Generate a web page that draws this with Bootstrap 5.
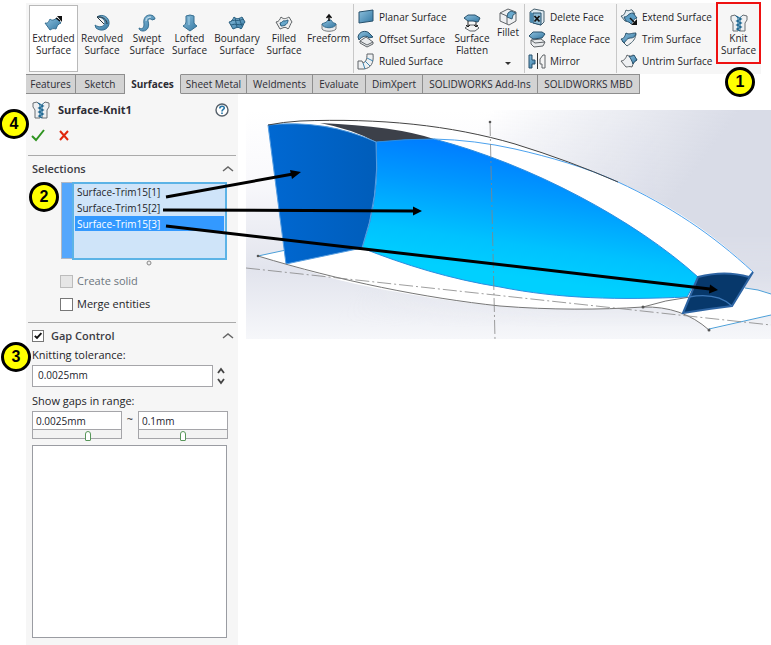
<!DOCTYPE html>
<html lang="en">
<head>
<meta charset="utf-8">
<meta name="viewport" content="width=device-width, initial-scale=1">
<title>Surface-Knit1</title>
<link href="https://cdn.jsdelivr.net/npm/bootstrap@5.3.0/dist/css/bootstrap.min.css" rel="stylesheet">
<style>
  body { font-family: "Open Sans", "Noto Sans", sans-serif; font-size: 10px; line-height: 12px; color: #1e1e28; background: #fff; }
  button, input { font: inherit; color: inherit; }
  svg { display: block; overflow: visible; }
  .workspace { padding: 3px 0 0 26px; }
  .ribbon { display: grid; grid-template-columns: 53px 46px 44px 41px 54px 40px 49px 99px 40px 32px 92px 1fr 46px; height: 71px; margin-right: 10px; background: #f6f6f6; max-width: 735px; }
  .tool { border: 1px solid transparent; background: none; padding: 10px 0 0; display: flex; flex-direction: column; align-items: center; white-space: nowrap; text-align: center; }
  .tool svg, .tool-row svg { width: 18px; height: 18px; flex: none; }
  .tool.active { background: #fff; border-color: #b9b9b9; margin: 2px 1px 2px 3px; padding-top: 8px; }
  .tool.fillet { padding-top: 4px; }
  .tool.knit { border: 2px solid #ee1111; width: 45px; height: 62px; margin-top: -1px; justify-self: end; }
  .tool-col { border-left: 1px solid #c8c8c8; padding: 2px 0 0 3px; height: 69px; margin-top: 1px; }
  .tool-row { border: 0; background: none; padding: 0; height: 22px; display: flex; align-items: center; gap: 4px; white-space: nowrap; }
  .tabs { display: grid; grid-template-columns: 50px 49px 56px 66px 66px 53px 57px 115px 102px; height: 20px; width: max-content; }
  .tabs button { background: #d3d3d3; border: 1px solid #8e8e8e; border-left-width: 0; padding: 0; white-space: nowrap; color: #2c2c34; }
  .tabs button.active { background: #f6f6f6; border-top-color: #f6f6f6; border-bottom-color: #f6f6f6; font-weight: 700; }
  .panel { width: 212px; flex: none; background: #f6f6f6; padding: 6px 5px 6px 6px; font-size: 11px; line-height: 16px; min-height: 551px; }
  .panel h1 { font-size: 11px; line-height: 20px; font-weight: 700; color: #2c2c34; margin: 0; }
  .panel h2 { font-size: 11px; line-height: 16px; font-weight: 600; color: #3c3c44; margin: 0; }
  .plain { border: 0; background: none; padding: 0; }
  .rule { border-top: 1px solid #aaa; margin: 0 -3px 0 -4px; }
  .decide { margin: 8px 0 13px; gap: 14px; }
  .group-head { margin: 5px 0; }
  .picker { margin-left: 29px; height: 78px; }
  .picker-bar { width: 11px; background: #55a7fc; border: 1px solid #b0b8c4; border-width: 1px 0 1px 1px; margin-bottom: 1px; }
  .picked { width: 155px; border: 2px solid #5cb3e6; background: #cfe4f9; padding: 0 1px; }
  .picked button { display: block; width: 100%; text-align: left; padding: 0 0 0 2px; border: 0; background: none; height: 16px; line-height: 14px; font-size: 10px; }
  .picked button.chosen { background: #3399ff; color: #fff; height: 15px; }
  .handle { margin-left: 114px; }
  .option { gap: 4px; margin: 7px 0 0 28px; }
  .option + .rule { margin-top: 10px; }
  .tick { appearance: none; width: 13px; height: 13px; border: 1px solid #777; background: #fff; margin: 0; flex: none; }
  .tick:disabled { background: #e6e6e6; border-color: #bcbcbc; }
  .tick.gap-tick { width: 12px; height: 12px; margin-right: 7px; }
  .tick:checked { background: #fff url("data:image/svg+xml,%3Csvg xmlns='http://www.w3.org/2000/svg' viewBox='0 0 10 10'%3E%3Cpath d='M1.8 4.8 4 7 8.4 2.2' fill='none' stroke='%23111' stroke-width='1.9'/%3E%3C/svg%3E") center/10px no-repeat; }
  .caption { display: block; margin: 6px 0 2px; }
  .group-head + .caption { margin-top: 3px; }
  .group-head.last { margin-bottom: 0; }
  .field { border: 1px solid #a5a5a9; background: #fff; border-radius: 0; font-size: 10px; min-width: 0; color: #22222c; }
  .tolerance { width: 181px; height: 22px; padding: 0 5px 3px; }
  .ranges { width: 196px; }
  .range-box { width: 90px; }
  .range-box .field { width: 100%; height: 19px; padding: 0 3px; display: block; }
  .range-box input[type=range] { appearance: none; display: block; width: 100%; height: 9px; margin: 0; border: 1px solid #a5a5a9; border-top: 0; background: #f3f3f3; }
  .range-box input[type=range]::-webkit-slider-thumb { appearance: none; width: 6px; height: 10px; border: 1px solid #58965a; border-radius: 3px 3px 1px 1px; background: #fff; margin-top: 3px; }
  .gap-list { width: 195px; height: 193px; border: 1px solid #9a9ca2; background: #fff; margin-top: 6px; }
  .view { margin: 16px 0 0 8px; min-width: 0; }
  .marker { position: absolute; width: 30px; height: 30px; border: 3px solid #000; border-radius: 50%; background: #ffff00; color: #000; font: 700 16px/24px "Liberation Sans", Arial, sans-serif; text-align: center; z-index: 3; }
  .m1 { left: 725px; top: 67px; } .m2 { left: 29px; top: 182px; } .m3 { left: 1px; top: 342px; } .m4 { left: -1px; top: 109px; }
</style>
<script src="https://cdn.jsdelivr.net/npm/bootstrap@5.3.0/dist/js/bootstrap.bundle.min.js"></script>
</head>
<body>
<svg width="0" height="0" class="position-absolute" aria-hidden="true">
  <defs>
    <linearGradient id="steel" x1="0" y1="0" x2="1" y2="1"><stop stop-color="#8dc0dd"/><stop offset="1" stop-color="#3478a3"/></linearGradient>
    <symbol id="zip" viewBox="0 0 18 18"><path d="M1 2 5 1l3 3v13H3V9L1 6zM17 2l-4-1-3 3v13h5V9l2-3z" fill="#eef0f2" stroke="#686e73"/><path d="M6 2l5 3-4 2 4 2-4 2 4 2-4 2 3 2" fill="none" stroke="#1f6791" stroke-width="1.400"/><path d="M12 2 7 5l4 2-4 2 4 2-4 2 4 2" fill="none" stroke="#5d9fc5" stroke-width=".8"/></symbol>
  </defs>
</svg>
<main class="workspace position-relative">
  <div class="ribbon" role="toolbar" aria-label="Surfaces">
    <button class="tool active"><svg viewBox="0 0 18 18"><path d="M0 9c3 1 4-2 5-4 2 2 4 1 7-1l4 5c-3 1-4 3-5 6-3-1-4 0-6 1z" fill="url(#steel)" stroke="#376f91"/><path d="M11 4l4 3" stroke="#111" stroke-width="1.500"/><path d="M12 2h5v6z" fill="#111"/></svg><span>Extruded<br>Surface</span></button>
    <button class="tool"><svg viewBox="0 0 18 18"><path d="M4 3C9-1 17 3 16 10c-1 6-8 8-13 4l-1-3c4 3 9 2 10-2 0-3-3-6-8-6z" fill="url(#steel)" stroke="#376f91"/><path d="M4 3c6-1 10 3 10 7M4 3l7 7" fill="none" stroke="#26343d"/></svg><span>Revolved<br>Surface</span></button>
    <button class="tool"><svg viewBox="0 0 18 18"><path d="M1 14c4 2 5-1 5-4-1-6 2-9 6-9 3 0 5 2 5 4l-3 1c-2-2-4-1-4 1 2 6-1 10-5 10-2 0-4-1-4-3z" fill="url(#steel)" stroke="#376f91"/><path d="M8 7c0-3 2-4 5-4" fill="none" stroke="#d5e9f3"/></svg><span>Swept<br>Surface</span></button>
    <button class="tool"><svg viewBox="0 0 18 18"><path d="M5 2q4-2 8 0v7q1 2 3 3l-7 5-7-5q3-1 3-4z" fill="url(#steel)" stroke="#376f91"/><path d="M8 3v8" stroke="#a7d2e8"/></svg><span>Lofted<br>Surface</span></button>
    <button class="tool"><svg viewBox="0 0 18 18"><path d="M1 8C4 8 5 5 6 3c3 3 6 1 8 0l3 5c-2 2-2 5-4 7-3-3-5-1-8 0z" fill="url(#steel)" stroke="#285d7e"/><path d="M3 11c5-2 7 1 12-1M7 4l2 9m2-9 3 8M3 7c5-2 7 1 12-2" fill="none" stroke="#285d7e"/></svg><span>Boundary<br>Surface</span></button>
    <button class="tool"><svg viewBox="0 0 18 18"><path d="M1 8C4 8 5 5 6 3c3 3 6 1 8 0l3 5c-2 2-2 5-4 7-3-3-5-1-8 0z" fill="#eee" stroke="#5e6366"/><path d="M5 9c2 0 3-3 4-2 2 0 3-1 4-1 0 4-3 6-7 6z" fill="#68a8cc" stroke="#285d7e"/></svg><span>Filled<br>Surface</span></button>
    <button class="tool"><svg viewBox="0 0 18 18"><path d="M2 10v5c2 3 12 3 14 0v-5z" fill="#e9ebed" stroke="#767b7e"/><path d="M2 10c1 5 13 5 14 0-1-1-4-1-5-4H8C7 9 3 9 2 10z" fill="url(#steel)" stroke="#376f91"/><path d="M9 7V1M6.500 4 9 1l2.500 3" fill="none" stroke="#111" stroke-width="1.500"/></svg><span>Freeform</span></button>
    <div class="tool-col">
      <button class="tool-row"><svg viewBox="0 0 18 18"><path d="M2 4 16 2v11L2 15z" fill="url(#steel)" stroke="#28516c"/></svg>Planar Surface</button>
      <button class="tool-row"><svg viewBox="0 0 18 18"><path d="M3 11l6-4 7 5v2l-6 3-7-4z" fill="#e9ebed" stroke="#606569"/><path d="M3 11l7 4 6-3" fill="none" stroke="#606569"/><path d="M1 7C2 1 9 0 12 3l4 4-4 1C10 5 5 6 2 10z" fill="url(#steel)" stroke="#28516c"/></svg>Offset Surface</button>
      <button class="tool-row"><svg viewBox="0 0 18 18"><path d="M1 9h4l1 2c3-1 4-4 4-9h6c1 9-2 14-9 15H1z" fill="#eef0f2" stroke="#606569"/><path d="M6 11l2 6M8 9l5 5M10 6l6 3" stroke="#3e86b1"/></svg>Ruled Surface</button>
    </div>
    <button class="tool"><svg viewBox="0 0 18 18"><path d="M2 14l4-3h7l3 3-4 3H7z" fill="#f3f3f3" stroke="#606569"/><path d="M1 4l4-3h7l5 3-2 4-5-1H5z" fill="url(#steel)" stroke="#28516c"/><path d="M5 7v6m-2-2 2 2 2-2m6-3v5m-2-2 2 2 2-2" fill="none" stroke="#222"/></svg><span>Surface<br>Flatten</span></button>
    <button class="tool fillet"><svg viewBox="0 0 18 18"><path d="M1 5 9 1l8 3v9l-7 4-9-4z" fill="#eef0f2" stroke="#606569"/><path d="M1 5l7 3v8" fill="none" stroke="#606569"/><path d="M8 9q0-5 4-6l5 2q-4 1-4 6z" fill="#6aaace" stroke="#345d76"/></svg><span>Fillet</span><svg style="height:5px" viewBox="0 0 18 5" class="mt-4"><path d="M6 0h6L9 3z" fill="#333"/></svg></button>
    <div class="tool-col">
      <button class="tool-row"><svg viewBox="0 0 18 18"><path d="M2 4 6 1l10 2v11l-3 3-11-3z" fill="#dbe9f1" stroke="#48616f"/><path d="M5 5h8v12l-8-2z" fill="#8dbbd5" stroke="#28516c"/><path d="M2 4l3 1v10l-3-1z" fill="#4a88ae"/><path d="M6.500 8l5 5.500m0-5.500-5 5.500" stroke="#111" stroke-width="1.800"/></svg>Delete Face</button>
      <button class="tool-row"><svg viewBox="0 0 18 18"><path d="M3 10l10-1 4 3-2 4-9 1-3-3z" fill="#e9ebed" stroke="#606569"/><path d="M3 10l4 3 10-1" fill="none" stroke="#606569"/><path d="M1 6l4-4h9l3 2-3 4-9 1z" fill="url(#steel)" stroke="#28516c"/></svg>Replace Face</button>
      <button class="tool-row"><svg viewBox="0 0 18 18"><path d="M1 3h3v5h3v4H4v4H1z" fill="url(#steel)" stroke="#28516c"/><path d="M9.500 1v16" stroke="#333"/><path d="M17 3h-2l-3 4v5h2v4h3z" fill="#f4f4f4" stroke="#606569"/></svg>Mirror</button>
    </div>
    <div class="tool-col">
      <button class="tool-row"><svg viewBox="0 0 18 18"><path d="M1 8c3 0 4-3 5-6 3 2 5-1 6 0l3 4c-3 1-3 4-5 7-3-1-4 1-5 0z" fill="#e4edf2" stroke="#48616f"/><path d="M4 9c4 0 4-4 9-4l4 5c-4 1-4 4-6 6-1-2-3-2-5-3z" fill="#5c9dc4" stroke="#28516c"/><path d="M10 10l4 4" stroke="#111" stroke-width="1.500"/><path d="M17 11v6h-6z" fill="#111"/></svg>Extend Surface</button>
      <button class="tool-row"><svg viewBox="0 0 18 18"><path d="M2 11c3 0 4-3 5-5 3 2 6-1 9-2-1 7-5 9-9 12z" fill="#f0f1f2" stroke="#48616f"/><path d="M1 9c3 0 4-3 5-6 3 2 5 0 10 0-1 5-4 5-6 5-3 0-4 3-6 5z" fill="url(#steel)" stroke="#28516c"/></svg>Trim Surface</button>
      <button class="tool-row"><svg viewBox="0 0 18 18"><path d="M1 9c3 0 5-3 6-6 3 2 4 1 6 0l4 5c-3 1-4 4-5 7-3-1-4 0-6 0z" fill="#eef0f2" stroke="#606569"/><path d="M9 4c2 1 3 0 5-1l3 5c-2 1-3 2-4 4-1-3-2-5-4-8z" fill="url(#steel)" stroke="#28516c"/></svg>Untrim Surface</button>
    </div>
    <button class="tool knit"><svg><use href="#zip"/></svg><span>Knit<br>Surface</span></button>
  </div>

  <nav class="tabs" aria-label="Command groups">
    <button>Features</button><button>Sketch</button><button class="active">Surfaces</button><button>Sheet Metal</button><button>Weldments</button><button>Evaluate</button><button>DimXpert</button><button>SOLIDWORKS Add-Ins</button><button>SOLIDWORKS MBD</button>
  </nav>

  <div class="d-flex align-items-start">
    <section class="panel">
      <div class="d-flex align-items-center">
        <svg width="18" height="18" class="me-2"><use href="#zip"/></svg>
        <h1 class="flex-grow-1">Surface-Knit1</h1>
        <button class="plain me-1" aria-label="Help"><svg width="14" height="14" viewBox="0 0 14 14"><circle cx="7" cy="7" r="6" fill="#fff" stroke="#56606a" stroke-width="1.400"/><path d="M4.800 5.500c0-3 4.500-3 4.500-.5C9.300 6.500 7 6.500 7 8.500m0 1v1.500" fill="none" stroke="#2877a8" stroke-width="1.600"/></svg></button>
      </div>
      <div class="d-flex decide">
        <button class="plain" aria-label="OK"><svg width="14" height="14" viewBox="0 0 14 14"><path d="M0 8l4 4 8-10" fill="none" stroke="#2f9420" stroke-width="2"/></svg></button>
        <button class="plain" aria-label="Cancel"><svg width="10" height="14" viewBox="0 0 10 14"><path d="M0 3l8 9M8 3 0 12" fill="none" stroke="#e0270c" stroke-width="2"/></svg></button>
      </div>
      <div class="rule"></div>
      <div class="d-flex justify-content-between align-items-center group-head">
        <h2>Selections</h2>
        <button class="plain" aria-label="Collapse selections"><svg width="10" height="8" viewBox="0 0 10 8"><path d="M0 6l5-4 5 4" fill="none" stroke="#666" stroke-width="1.500"/></svg></button>
      </div>
      <div class="picker d-flex">
        <div class="picker-bar"></div>
        <div class="picked">
          <button>Surface-Trim15[1]</button><button>Surface-Trim15[2]</button><button class="chosen">Surface-Trim15[3]</button>
        </div>
      </div>
      <svg width="6" height="6" viewBox="0 0 6 6" class="handle"><circle cx="3" cy="3" r="2" fill="#eee" stroke="#888"/></svg>
      <div class="d-flex align-items-center option"><input class="tick" type="checkbox" id="solid" disabled><label for="solid" class="text-secondary">Create solid</label></div>
      <div class="d-flex align-items-center option"><input class="tick" type="checkbox" id="merge"><label for="merge">Merge entities</label></div>
      <div class="rule"></div>
      <div class="d-flex align-items-center group-head last">
        <input class="tick gap-tick" type="checkbox" id="gap" checked>
        <h2 class="flex-grow-1"><label for="gap">Gap Control</label></h2>
        <button class="plain" aria-label="Collapse gap control"><svg width="10" height="8" viewBox="0 0 10 8"><path d="M0 6l5-4 5 4" fill="none" stroke="#666" stroke-width="1.500"/></svg></button>
      </div>
      <label for="tol" class="caption">Knitting tolerance:</label>
      <div class="d-flex align-items-center gap-1"><input class="field tolerance" id="tol" value="0.0025mm">
        <div class="d-flex flex-column gap-1"><button class="plain" aria-label="Increase"><svg width="9" height="6" viewBox="0 0 9 6"><path d="M1 5l3-4 3 4" fill="none" stroke="#444" stroke-width="1.800"/></svg></button><button class="plain" aria-label="Decrease"><svg width="9" height="6" viewBox="0 0 9 6"><path d="M1 1l3 4 3-4" fill="none" stroke="#444" stroke-width="1.800"/></svg></button></div>
      </div>
      <label for="low" class="caption">Show gaps in range:</label>
      <div class="d-flex justify-content-between ranges">
        <div class="range-box"><input class="field" id="low" value="0.0025mm"><input type="range" aria-label="Lowest gap" min="0" max="100" value="63"></div>
        <span>~</span>
        <div class="range-box"><input class="field" aria-label="Highest gap" value="0.1mm"><input type="range" aria-label="Highest gap slider" min="0" max="100" value="50"></div>
      </div>
      <div class="gap-list"></div>
    </section>

    <figure class="view flex-grow-1 mb-0">
      <svg class="w-100" viewBox="246 110 525 229" preserveAspectRatio="xMinYMin meet" role="img" aria-label="Selected faces of the surface model">
        <defs>
          <linearGradient id="sky" x1="0" y1="0" x2="0" y2="1"><stop stop-color="#fff"/><stop offset=".3" stop-color="#f9f9fc"/><stop offset=".7" stop-color="#e2e4ed"/><stop offset="1" stop-color="#f6f7fa"/></linearGradient>
          <linearGradient id="haze" gradientUnits="userSpaceOnUse" x1="520" y1="70" x2="680" y2="190"><stop stop-color="#d9dce7" stop-opacity="0"/><stop offset="1" stop-color="#d9dce7"/></linearGradient>
          <linearGradient id="fade" x1="0" y1="0" x2="0" y2="1"><stop offset=".55" stop-color="#fff"/><stop offset=".95" stop-color="#000"/></linearGradient>
          <mask id="upper"><rect x="246" y="110" width="525" height="229" fill="url(#fade)"/></mask>
          <linearGradient id="hull" gradientUnits="userSpaceOnUse" x1="500" y1="145" x2="482" y2="272"><stop stop-color="#007aff"/><stop offset=".35" stop-color="#0099ff"/><stop offset=".75" stop-color="#00c2ff"/><stop offset="1" stop-color="#00d0ff"/></linearGradient>
          <linearGradient id="stern"><stop stop-color="#0068d2"/><stop offset="1" stop-color="#005dba"/></linearGradient>
        </defs>
        <path d="M246 110h525v229H246z" fill="url(#sky)"/>
        <path d="M246 110h525v229H246z" fill="url(#haze)" mask="url(#upper)"/>
        <path d="M268 125C300 120 350 120 395 122C445 125 480 133 515 144C560 158 590 170 620 183C670 204 716 235 753 272L732 306 687 297 643 307C600 310 545 309 500 306C440 301 370 288 335 279L258 256 286 250z" fill="#fff"/>
        <path d="M643 307C660 302 675 299 690 297L745 288Q758 289 771 294V315L709 330Q680 306 643 307z" fill="#fff"/>
        <path d="M258 256 286 250M745 288Q758 289 771 294M709 329 771 315" fill="none" stroke="#4c9fd8"/>
        <path d="M320 123Q395 126 434 139L376 142Q352 129 320 123z" fill="#3c4049"/>
        <path d="M376 142Q405 139 434 139C530 164 635 220 698 277L687 297C620 300 560 299 500 287C450 279 405 265 362 248Q381 195 376 142z" fill="url(#hull)" stroke="#2d8de0"/>
        <path d="M268 125Q325 119 376 142Q380 195 362 248L286 264z" fill="url(#stern)" stroke="#559de0"/>
        <path d="M434 139Q475 140 515 149C550 157 585 167 618 182C670 206 712 234 753 272" fill="none" stroke="#4ca2ee"/>
        <path d="M268 125Q283 122 300 121C380 118 450 125 515 144Q570 161 618 182" fill="none" stroke="#444"/>
        <path d="M258 256C340 281 425 298 500 306C550 310 600 310 643 307Q682 306 709 330M643 307Q665 300 690 297" fill="none" stroke="#777"/>
        <path d="M698 277Q725 270 749 277L753 272 732 306Q707 309 683 313z" fill="#07386b" stroke="#2d64a3" stroke-width="2"/>
        <path d="M689 297Q717 292 732 306" fill="none" stroke="#3d78b8" stroke-width="1.300"/>
        <path d="M246 268 771 325M490 122 495 339" fill="none" stroke="#858585" stroke-width=".8" stroke-dasharray="14 3 2 3"/>
        <g fill="#555"><circle cx="490" cy="122" r="1.300"/><circle cx="258" cy="256" r="1.300"/><circle cx="709" cy="330" r="1.500"/><circle cx="643" cy="307" r="1.500"/></g>
        <g stroke="#000" stroke-width="3"><path d="M166 197 293 174M163 210 414 211M166 226 710 289"/></g>
        <path d="M301 172 290 170 292 179zM422 211 413 206.500V215.500zM718 290 710 284.500 709 293.500z"/>
      </svg>
    </figure>
  </div>
  <span class="marker m1">1</span><span class="marker m2">2</span><span class="marker m3">3</span><span class="marker m4">4</span>
</main>
</body>
</html>
